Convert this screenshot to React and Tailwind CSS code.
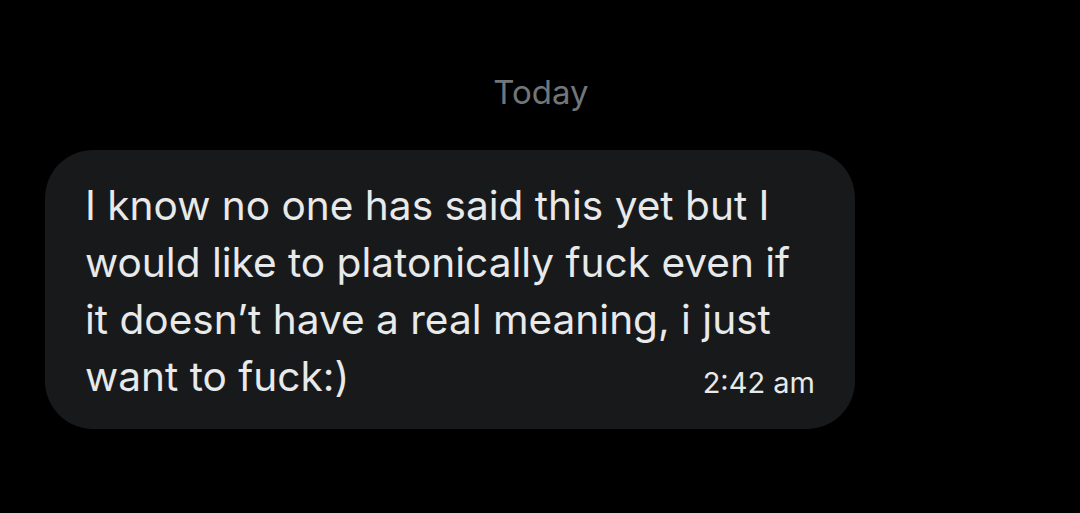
import React from "react";

const lines = [
  "I know no one has said this yet but I",
  "would like to platonically fuck even if",
  "it doesn\u2019t have a real meaning, i just",
];

export default function App() {
  return (
    <div className="h-[513px] w-[1080px] overflow-hidden bg-black font-['Inter',sans-serif]">
      <div className="flex justify-center pt-[70px] pl-[2px]">
        <span className="text-[33px] leading-[44px] text-[#71767b]">Today</span>
      </div>
      <div className="ml-[45px] mt-[36px] w-[810px] rounded-[48px] bg-[#18191b] pl-[40px] pr-[40px] pt-[27px] pb-[20px] text-[#e7e9ea]">
        {lines.map((line) => (
          <div key={line} className="text-[40.6px] leading-[57px] whitespace-nowrap">
            {line}
          </div>
        ))}
        <div className="flex items-baseline justify-between">
          <span className="text-[40.6px] leading-[57px]">want to fuck:)</span>
          <span className="text-[29px] leading-[57px] translate-y-[2px]">2:42 am</span>
        </div>
      </div>
    </div>
  );
}
